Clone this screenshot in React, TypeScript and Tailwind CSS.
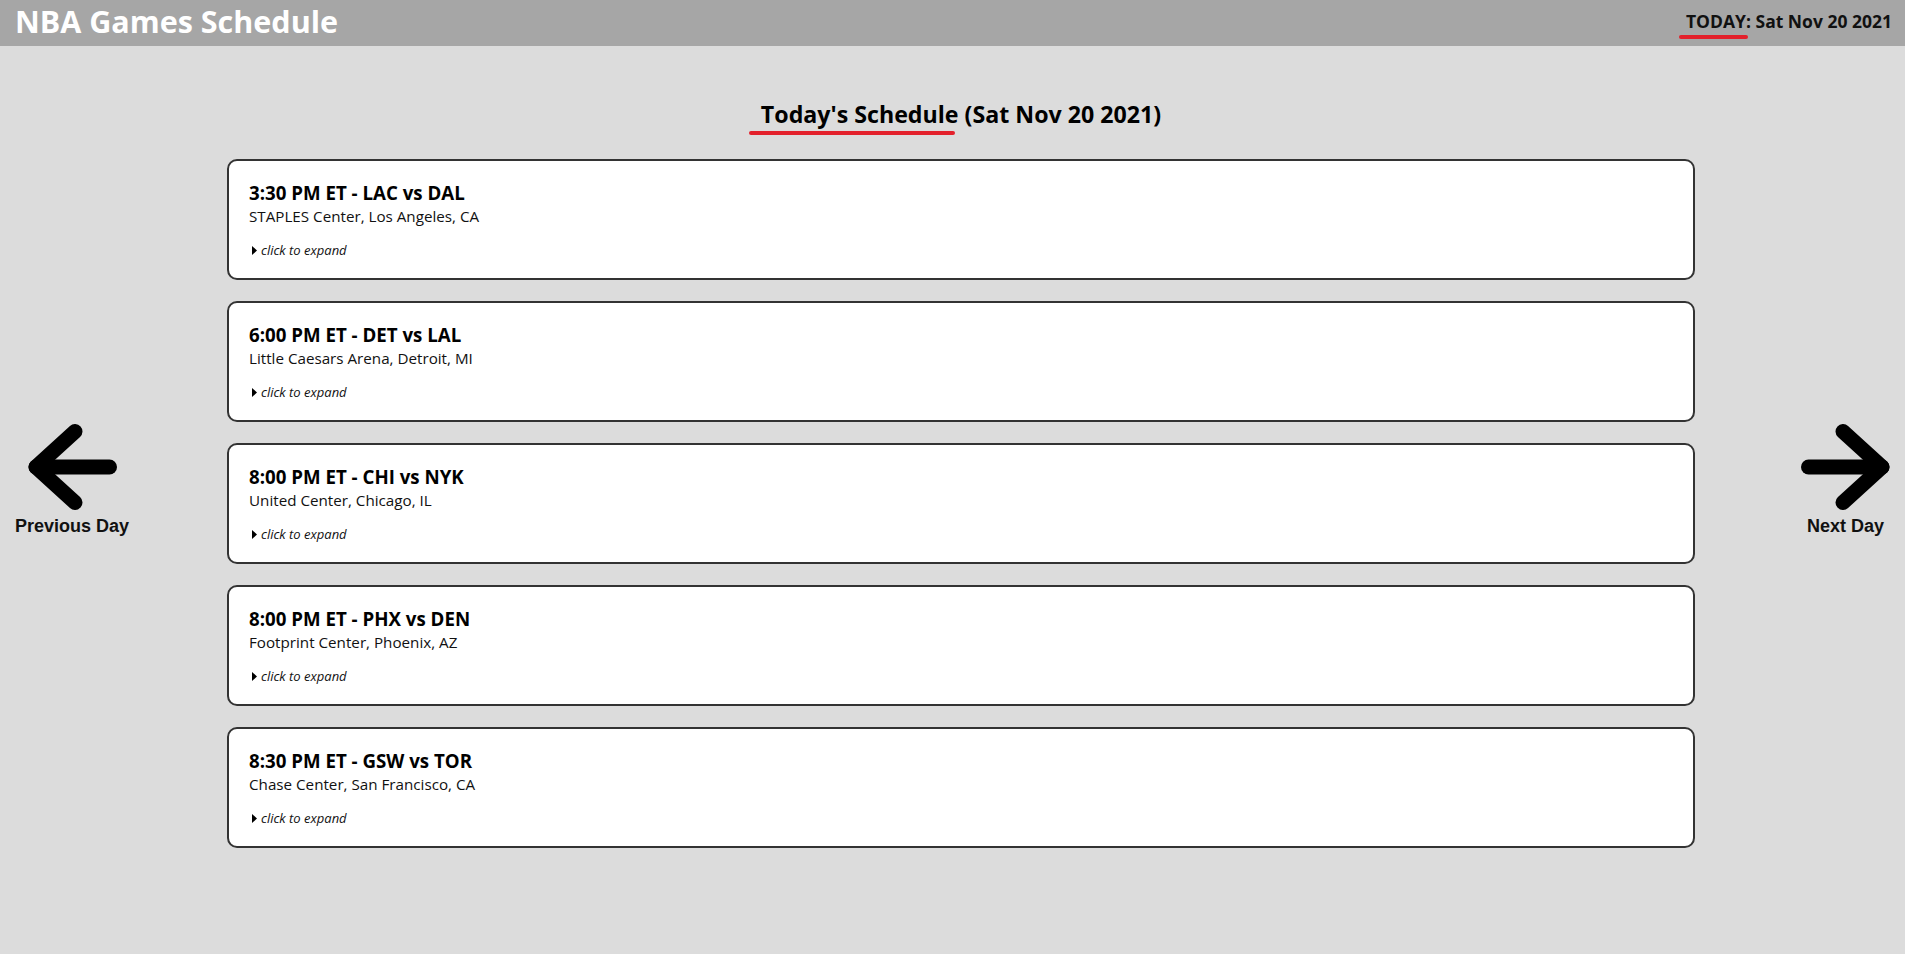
import React from 'react';

const games = [
  { time: '3:30 PM ET', teams: 'LAC vs DAL', venue: 'STAPLES Center, Los Angeles, CA' },
  { time: '6:00 PM ET', teams: 'DET vs LAL', venue: 'Little Caesars Arena, Detroit, MI' },
  { time: '8:00 PM ET', teams: 'CHI vs NYK', venue: 'United Center, Chicago, IL' },
  { time: '8:00 PM ET', teams: 'PHX vs DEN', venue: 'Footprint Center, Phoenix, AZ' },
  { time: '8:30 PM ET', teams: 'GSW vs TOR', venue: 'Chase Center, San Francisco, CA' },
];

const Arrow = ({ dir }: { dir: 'left' | 'right' }) => (
  <svg width="89" height="86" viewBox="0 0 89 86" className={dir === 'right' ? 'scale-x-[-1]' : ''}>
    <g fill="none" stroke="#000" strokeWidth="15" strokeLinecap="round" strokeLinejoin="round">
      <path d="M47 7.5 L8 43 L47 78.5" />
      <path d="M8 43 H81.5" />
    </g>
  </svg>
);

const GameCard = ({ time, teams, venue }: { time: string; teams: string; venue: string }) => (
  <div className="h-[121px] bg-white border-2 border-[#333333] rounded-[10px] px-5 pt-[21px] flex flex-col">
    <h3 className="text-[18.7px] leading-[22px] font-bold text-black">{time} - {teams}</h3>
    <p className="mt-[2px] text-[15.2px] leading-[20px] text-[#111]">{venue}</p>
    <div className="mt-[16px] flex items-center gap-[4px] text-[13px] leading-[16px] italic text-[#111]">
      <svg width="5" height="9" viewBox="0 0 5 9" className="ml-[3px]">
        <path d="M0 0 L5 4.5 L0 9 Z" fill="#000" />
      </svg>
      <span>click to expand</span>
    </div>
  </div>
);

const NavButton = ({ dir, label }: { dir: 'left' | 'right'; label: string }) => (
  <button className="flex flex-col items-center cursor-pointer">
    <Arrow dir={dir} />
    <span className="mt-[5px] text-[18px] leading-[22px] font-bold text-[#111]" style={{ fontFamily: '"Liberation Sans", Arial, sans-serif' }}>
      {label}
    </span>
  </button>
);

export default function App() {
  return (
    <div className="min-h-screen w-full bg-[#dcdcdc]" style={{ fontFamily: '"Open Sans", "Noto Sans", sans-serif' }}>
      <header className="h-[46px] bg-[#a6a6a6] flex items-center justify-between pl-[15px] pr-[13px]">
        <h1 className="text-[30.5px] leading-[40px] font-bold text-white pb-[4px]">NBA Games Schedule</h1>
        <div className="relative text-[17.5px] leading-[24px] font-bold text-[#111] pb-[4px]">
          <span className="relative">
            TODAY:
            <span className="absolute left-[-7px] right-[3px] top-[26px] h-[4px] rounded-full bg-[#e3202b]" />
          </span>{' '}
          Sat Nov 20 2021
        </div>
      </header>

      <div className="flex">
        <div className="w-[227px] pt-[378px] pl-[15px] flex">
          <NavButton dir="left" label="Previous Day" />
        </div>

        <main className="w-[1468px] pt-[52px] pb-[40px]">
          <h2 className="text-center text-[23.2px] leading-[32px] font-bold text-black">
            <span className="relative">
              Today's Schedule
              <span className="absolute left-[-12px] right-[4px] top-[33px] h-[4px] rounded-full bg-[#e3202b]" />
            </span>{' '}
            (Sat Nov 20 2021)
          </h2>
          <div className="mt-[29px] flex flex-col gap-[21px]">
            {games.map((g, i) => (
              <GameCard key={i} {...g} />
            ))}
          </div>
        </main>

        <div className="flex-1 pt-[378px] pr-[15px] flex justify-end">
          <NavButton dir="right" label="Next Day" />
        </div>
      </div>
    </div>
  );
}
